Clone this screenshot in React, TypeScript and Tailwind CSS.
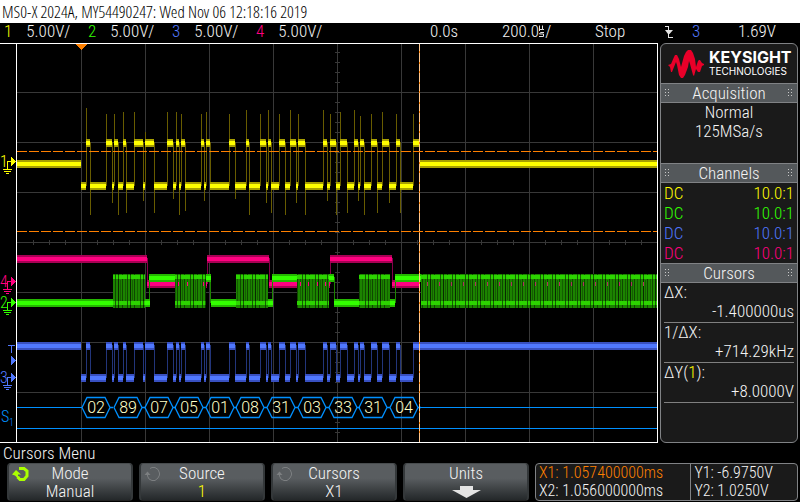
import React from "react";

const YELLOW = "#ffff00";
const GREEN = "#33ff00";
const BLUE = "#5078ff";
const PINK = "#ff0080";
const ORANGE = "#ff8000";
const SERIAL = "#0090ff";

type Pulse = [start: number, end: number, top: number, bottom: number];

// Bus pulses: rising x, falling x, overshoot top, undershoot bottom
const pulses: Pulse[] = [
  [86, 90, 108, 215], [106, 112, 114, 203], [114, 118, 114, 215], [123, 126, 112, 213],
  [134, 143, 112, 201], [145, 154, 132, 213], [167, 173, 112, 199], [176, 179, 112, 215],
  [181, 185, 114, 211], [201, 204, 114, 201], [206, 210, 112, 187], [229, 235, 114, 199],
  [246, 249, 110, 215], [260, 266, 114, 203], [268, 271, 110, 213], [279, 285, 114, 215],
  [290, 296, 110, 203], [298, 305, 114, 215], [323, 327, 110, 201], [330, 336, 114, 215],
  [340, 347, 112, 213], [354, 358, 110, 201], [360, 364, 116, 215], [371, 377, 114, 213],
  [382, 389, 112, 203], [396, 400, 114, 213], [413, 419, 114, 187],
];

const highs: [number, number][] = pulses.map(([a, b]) => [a, b]);
const lows: [number, number][] = pulses.map((p, i) => [i === 0 ? 81 : pulses[i - 1][1], p[0]]);

function Band({ x1, x2, y, dim, core }: { x1: number; x2: number; y: number; dim: string; core: string }) {
  const w = x2 - x1;
  return (
    <g>
      <rect x={x1} y={y - 3} width={w} height={8} fill={dim} />
      <rect x={x1} y={y - 1} width={w} height={4} fill={core} />
    </g>
  );
}

function Burst({ x1, x2 }: { x1: number; x2: number }) {
  const w = x2 - x1;
  return (
    <g>
      <rect x={x1} y={274} width={w} height={34} fill="url(#burst)" />
      <rect x={x1} y={275} width={w} height={4} fill="url(#burstEdge)" />
      <rect x={x1} y={301} width={w} height={4} fill="url(#burstEdge)" />
    </g>
  );
}

function Ground({ y, color, label }: { y: number; color: string; label: string }) {
  return (
    <g fill={color}>
      <text x={0} y={y + 6} fontSize="16" className="font-['Roboto_Condensed_Light','Roboto',sans-serif]">{label}</text>
      <path d={`M11 ${y - 4}L16 ${y + 0.5}L11 ${y + 5}Z`} />
      <path d={`M7 ${y}h4v1h-3v7h4v1h-9v-1h4z M4 ${y + 10}h7v1h-7z M6 ${y + 12}h3v1h-3z`} />
    </g>
  );
}

const bytes: [number, string][] = [
  [82, "02"], [114, "89"], [145, "07"], [175, "05"], [206, "01"], [236, "08"],
  [267, "31"], [298, "03"], [329, "33"], [359, "31"], [390, "04"],
];

const seg = (pts: [number, number][], y: number, dim: string, core: string) =>
  pts.map(([a, b]) => <Band key={`${a}-${y}`} x1={a} x2={b} y={y} dim={dim} core={core} />);

function Scope() {
  return (
    <svg viewBox="0 43 659 400" className="block w-full" role="img" aria-label="Oscilloscope traces" shapeRendering="crispEdges">
      <defs>
        <pattern id="burst" x="0" y="274" width="25" height="34" patternUnits="userSpaceOnUse">
          <rect width="25" height="34" fill="#1c8400" />
          <path d="M2 0h1v34h-1z M9 0h1v34h-1z M15 0h1v34h-1z M22 0h1v34h-1z" fill="#0f4800" />
          <path d="M5 0h1v34h-1z M18 0h1v34h-1z" fill="#082a00" />
          <path d="M0 4h1v26h-1z M7 6h1v20h-1z M12 4h1v26h-1z M20 6h1v24h-1z" fill="#146000" />
        </pattern>
        <pattern id="burstEdge" width="25" height="400" patternUnits="userSpaceOnUse">
          <rect width="25" height="400" fill="#2cd400" />
          <path d="M2 0h1v400h-1z M5 0h1v400h-1z M15 0h1v400h-1z M18 0h1v400h-1z" fill="#146000" />
        </pattern>
      </defs>

      <g fill="#383838">
        {[81, 145, 209, 273, 337, 401, 465, 529, 593].map((x) => <rect key={x} x={x} y={44} width={1} height={398} />)}
        {[92, 142, 192, 242, 292, 342, 392].map((y) => <rect key={y} x={17} y={y} width={640} height={1} />)}
        {Array.from({ length: 39 }, (_, i) => <rect key={i} x={335} y={52 + i * 10} width={5} height={1} />)}
        {Array.from({ length: 39 }, (_, i) => <rect key={i} x={33 + i * 16} y={240} width={1} height={5} />)}
      </g>

      <g fill="#685c00">
        {pulses.map(([a, b, top, bottom]) => (
          <g key={a}>
            <rect x={a} y={top} width={1} height={186 - top} />
            <rect x={b} y={142} width={1} height={bottom - 142} />
          </g>
        ))}
      </g>
      {seg([[17, 81], [420, 657]], 163, "#a8a000", YELLOW)}
      {seg(highs, 142, "#a8a000", YELLOW)}
      {seg(lows, 185, "#a8a000", YELLOW)}

      <g fill="#85004a">
        {[147, 207, 269, 330, 392].map((x) => <rect key={x} x={x} y={258} width={1} height={26} />)}
      </g>
      {seg([[17, 147], [207, 269], [330, 392]], 258, "#a80054", PINK)}
      {seg([[147, 207], [269, 330], [392, 420]], 283, "#a80054", PINK)}

      {[[113, 145], [175, 206], [236, 268], [297, 329], [359, 390], [421, 657]].map(([a, b]) => <Burst key={a} x1={a} x2={b} />)}
      <g fill={PINK}>
        {[178, 187, 203, 300, 308, 317, 325].map((x) => <rect key={x} x={x} y={282} width={1} height={4} />)}
      </g>
      <g fill="#b0305c">
        {Array.from({ length: 19 }, (_, i) => <rect key={i} x={427 + i * 12} y={282} width={1} height={4} />)}
      </g>
      <g fill="#1c8400">
        {[149, 210, 272, 334, 395].map((x) => <rect key={x} x={x} y={277} width={1} height={26} />)}
      </g>
      {seg([[149, 175], [206, 211], [272, 297], [329, 334], [395, 421]], 277, "#24b800", GREEN)}
      {seg([[17, 113], [145, 150], [211, 236], [268, 273], [334, 359], [390, 395]], 302, "#24b800", GREEN)}

      <g fill="#22357a">
        {pulses.map(([a, b]) => (
          <g key={a}>
            <rect x={a} y={345} width={1} height={33} />
            <rect x={b} y={345} width={1} height={b === 419 ? 1 : 33} />
          </g>
        ))}
      </g>
      {seg([[17, 81], ...highs, [419, 657]], 345, "#3850c0", BLUE)}
      {seg(lows, 377, "#3850c0", BLUE)}

      <g fill={SERIAL}>
        <rect x={17} y={407} width={65} height={1} />
        <rect x={419} y={407} width={238} height={1} />
        <rect x={17} y={428} width={640} height={1} />
      </g>
      {bytes.map(([x, value]) => (
        <g key={x}>
          <path d={`M${x} 407.5L${x + 5} 397.5H${x + 23}L${x + 28} 407.5L${x + 23} 417.5H${x + 5}Z M${x + 28} 407.5h3`} fill="none" stroke={SERIAL} shapeRendering="auto" strokeWidth="1.3" />
          <text x={x + 14} y={413} textAnchor="middle" fontSize="16" fill="#ffffc8" className="font-['Roboto_Light','Roboto',sans-serif]">{value}</text>
        </g>
      ))}

      <path d="M17 151.5H657M17 231.5H657" stroke={ORANGE} strokeDasharray="10 2" />
      <path d="M419.5 44V442" stroke={ORANGE} />
      <path d="M419.5 44V442" stroke="#ffc890" strokeDasharray="7 2 9 2" />

      <rect x={16} y={43} width={1} height={400} fill="#fff" />
      <rect x={657} y={43} width={1} height={400} fill="#fff" />
      <rect x={0} y={43} width={658} height={1} fill="#fff" />
      <rect x={0} y={442} width={658} height={1} fill="#fff" />
      <path d="M76 44h11l-5.5 6z" fill={ORANGE} />

      <Ground y={161} color={YELLOW} label="1" />
      <Ground y={281} color={PINK} label="4" />
      <Ground y={302} color={GREEN} label="2" />
      <Ground y={377} color={BLUE} label="3" />
      <path d="M8 345h7v1h-3v7h-1v-7h-3z M11 356l5 4.500l-5 4.500z" fill={BLUE} />
      <g fill={SERIAL} className="font-['Roboto_Condensed_Light','Roboto',sans-serif]">
        <text x={1} y={422} fontSize="16">S</text>
        <text x={9} y={426} fontSize="10">1</text>
      </g>
    </svg>
  );
}

function Channel({ n, className }: { n: string; className: string }) {
  return (
    <div className="flex gap-[14px] pl-1">
      <span className={className}>{n}</span>
      <span>5.00V/</span>
    </div>
  );
}

function Grip() {
  return (
    <svg width="5" height="8" viewBox="0 0 5 8" fill="#c8c8c8" aria-hidden="true">
      <path d="M0 0h1v1h-1z M3 0h1v1h-1z M0 3h1v1h-1z M3 3h1v1h-1z M0 6h1v1h-1z M3 6h1v1h-1z" />
    </svg>
  );
}

function PanelTitle({ children }: { children: React.ReactNode }) {
  return (
    <h2 className="flex h-5 items-center justify-between border-y border-[#808285] bg-[#54585b] px-1">
      <Grip />
      <span>{children}</span>
      <Grip />
    </h2>
  );
}

function Reading({ label, value }: { label: React.ReactNode; value: string }) {
  return (
    <div className="mx-[3px] h-10 border-b border-[#808080] leading-[19px]">
      <dt>{label}</dt>
      <dd className="text-right">{value}</dd>
    </div>
  );
}

function Knob({ className }: { className: string }) {
  return (
    <svg width="18" height="16" viewBox="0 0 18 16" className={`absolute left-[3px] top-[2px] ${className}`} fill="none" aria-hidden="true">
      <path d="M7 2.500H12L15 5V10L12 13.500H8L5.500 11" stroke="currentColor" strokeWidth="var(--knob)" />
      <path d="M0 8.500L4 4L9 8.500H6V10L8 11L6 12.500L3 9.500Z" fill="currentColor" />
    </svg>
  );
}

function ThinKnob() {
  return (
    <svg width="18" height="16" viewBox="0 0 18 16" className="absolute left-[3px] top-[2px] text-[#7c7f81]" fill="none" aria-hidden="true">
      <path d="M6 2.500L8 1.500H11L14 3.500L15.500 7V9L14 12L11 14.500H8L5 13L3.500 10V7" stroke="currentColor" />
      <path d="M0.500 9L3.500 5.500L6.500 9Z" fill="currentColor" />
    </svg>
  );
}

function SoftKey({ title, icon, children }: { title: string; icon?: React.ReactNode; children: React.ReactNode }) {
  return (
    <button
      type="button"
      className="relative flex h-[38px] flex-col items-center rounded-[4px] border-x-2 border-t border-b border-x-[#34383a] border-t-[#484c4e] border-b-[#222] bg-linear-to-b from-[#595d60] from-40% to-[#24282a] leading-[18px]"
    >
      {icon}
      <span>{title}</span>
      {children}
    </button>
  );
}

export default function App() {
  return (
    <div className="bg-black font-['Roboto_Condensed_Light','Roboto',sans-serif] text-[17px] leading-5 text-[#f4f4f4]">
      <header className="h-[23px] bg-white pl-[2px] font-['Open_Sans_Condensed_Light','Roboto_Condensed_Light',sans-serif] leading-[23px] text-black">
        MS0-X 2024A, MY54490247: Wed Nov 06 12:18:16 2019
      </header>

      <div className="grid h-5 grid-cols-[84fr_84fr_84fr_94fr_84fr_72fr_93fr_70fr_27fr_46fr_62fr] leading-[17px]">
        <Channel n="1" className="text-[#ffff00]" />
        <Channel n="2" className="text-[#33ff00]" />
        <Channel n="3" className="text-[#5078ff]" />
        <Channel n="4" className="text-[#ff0080]" />
        <span />
        <span>0.0s</span>
        <span className="flex">
          200.0
          <svg width="6" height="13" viewBox="0 0 6 13" className="mt-[2px]" fill="none" stroke="#e4e4e4" role="img" aria-label="µs">
            <path d="M0.500 6V0.500M0.500 4.500H3.500V0.500M3.500 4.500H5M5 7.500H1.500L0.500 9H4.500V11.500H0" />
          </svg>
          /
        </span>
        <span>Stop</span>
        <svg width="8" height="12" viewBox="0 0 8 12" className="mt-[3px]" fill="#e4e4e4" aria-label="Falling edge trigger">
          <path d="M0 0h4v4h4l-3.500 4h-.5v3h4v1h-5v-4l-3-4h3v-3h-3z" />
        </svg>
        <span className="text-[#5078ff]">3</span>
        <span>1.69V</span>
      </div>

      <main className="flex">
        <div className="min-w-0 flex-1"><Scope /></div>
        <aside className="mr-[2px] ml-px w-[138px] shrink-0 overflow-hidden rounded-[6px] border border-[#808285] bg-[#1a1a1a]">
          <div className="flex h-[39px] items-center gap-[5px] pl-[7px] font-['Inter',sans-serif] text-white">
            <svg width="36" height="28" viewBox="0 0 36 28" className="shrink-0" fill="#e90029" aria-hidden="true">
              <path d="M0 15L3 14L6 7L7 5H9L11 9L13 17L16 6L18 2L20 0H23L25 3L27 9L28 17L30 11L31 10H32L34 13L36 14V15L34 16L32 22H30L28 19L26 26L25 25L22 14L21 11L20 17L17 25L15 28H13L11 25L9 15L8 12L6 17L4 22H3L2 17Z" />
            </svg>
            <div>
              <div className="text-[16px] font-bold leading-[15px]">KEYSIGHT</div>
              <div className="text-[10px] leading-3">TECHNOLOGIES</div>
            </div>
          </div>
          <PanelTitle>Acquisition</PanelTitle>
          <div className="h-[60px] text-center leading-[19px]">
            <div>Normal</div>
            <div>125MSa/s</div>
          </div>
          <PanelTitle>Channels</PanelTitle>
          <table className="w-full">
            <tbody>
              {["text-[#ffff00]", "text-[#33ff00]", "text-[#5078ff]", "text-[#ff0080]"].map((c) => (
                <tr key={c} className={c}>
                  <td className="p-0 pl-[3px]">DC</td>
                  <td className="p-0 pr-[3px] text-right">10.0:1</td>
                </tr>
              ))}
            </tbody>
          </table>
          <PanelTitle>Cursors</PanelTitle>
          <dl>
            <Reading label="ΔX:" value="-1.400000us" />
            <Reading label="1/ΔX:" value="+714.29kHz" />
            <Reading label={<>ΔY(<span className="text-[#ffff00]">1</span>):</>} value="+8.0000V" />
          </dl>
        </aside>
      </main>

      <footer className="pb-px">
        <h2 className="h-5 pl-[3px]">Cursors Menu</h2>
        <div className="grid grid-cols-[126fr_126fr_126fr_126fr_263fr] gap-[6px] pr-[2px] pl-[7px]">
          <SoftKey title="Mode" icon={<Knob className="text-[#aaff00] [--knob:3]" />}><span>Manual</span></SoftKey>
          <SoftKey title="Source" icon={<ThinKnob />}><span className="text-[#ffff00]">1</span></SoftKey>
          <SoftKey title="Cursors" icon={<ThinKnob />}><span>X1</span></SoftKey>
          <SoftKey title="Units">
            <svg width="29" height="12" viewBox="0 0 29 12" className="mt-[4px]" fill="#e4e4e4" aria-hidden="true">
              <path d="M8 0h13v4h8l-14.500 8l-14.500-8h8z" />
            </svg>
          </SoftKey>
          <div className="grid h-[38px] grid-cols-[156fr_106fr] rounded-[4px] border border-[#808285] bg-[#1a1a1a] text-[16px] leading-[18px]">
            <div className="border-r border-[#808285] pl-[3px]">
              <div className="text-[#ff8000]">X1: 1.057400000ms</div>
              <div>X2: 1.056000000ms</div>
            </div>
            <div className="pl-[3px]">
              <div>Y1: -6.9750V</div>
              <div>Y2: 1.0250V</div>
            </div>
          </div>
        </div>
      </footer>
    </div>
  );
}
